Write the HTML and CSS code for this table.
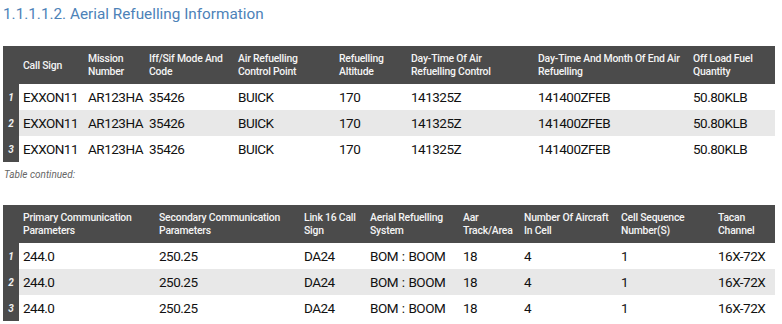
FILE: index.html
```html
<!DOCTYPE html>
<html>
<head>
<meta charset="utf-8">
<link rel="stylesheet" href="styles.css">
</head>
<body>
<div class="page">
  <h3 class="title">1.1.1.1.2. Aerial Refuelling Information</h3>
  <table class="data t1">
    <colgroup>
      <col class="c-num"><col style="width:65px"><col style="width:61px"><col style="width:89px"><col style="width:101px"><col style="width:72px"><col style="width:127px"><col style="width:155px"><col style="width:86px">
    </colgroup>
    <thead>
      <tr><th class="num"></th><th>Call Sign</th><th>Mission Number</th><th>Iff/Sif Mode And Code</th><th>Air Refuelling Control Point</th><th>Refuelling Altitude</th><th>Day-Time Of Air<br>Refuelling Control</th><th>Day-Time And Month Of End Air Refuelling</th><th>Off Load Fuel Quantity</th></tr>
    </thead>
    <tbody>
      <tr><td class="num">1</td><td>EXXON11</td><td>AR123HA</td><td>35426</td><td>BUICK</td><td>170</td><td>141325Z</td><td>141400ZFEB</td><td>50.80KLB</td></tr>
      <tr><td class="num">2</td><td>EXXON11</td><td>AR123HA</td><td>35426</td><td>BUICK</td><td>170</td><td>141325Z</td><td>141400ZFEB</td><td>50.80KLB</td></tr>
      <tr><td class="num">3</td><td>EXXON11</td><td>AR123HA</td><td>35426</td><td>BUICK</td><td>170</td><td>141325Z</td><td>141400ZFEB</td><td>50.80KLB</td></tr>
    </tbody>
  </table>
  <p class="continued">Table continued:</p>
  <table class="data t2">
    <colgroup>
      <col class="c-num"><col style="width:136px"><col style="width:145px"><col style="width:66px"><col style="width:93px"><col style="width:61px"><col style="width:97px"><col style="width:97px"><col style="width:61px">
    </colgroup>
    <thead>
      <tr><th class="num"></th><th>Primary Communication Parameters</th><th>Secondary Communication Parameters</th><th>Link 16 Call Sign</th><th>Aerial Refuelling System</th><th>Aar Track/Area</th><th>Number Of Aircraft In Cell</th><th>Cell Sequence Number(S)</th><th>Tacan Channel</th></tr>
    </thead>
    <tbody>
      <tr><td class="num">1</td><td>244.0</td><td>250.25</td><td>DA24</td><td>BOM : BOOM</td><td>18</td><td>4</td><td>1</td><td>16X-72X</td></tr>
      <tr><td class="num">2</td><td>244.0</td><td>250.25</td><td>DA24</td><td>BOM : BOOM</td><td>18</td><td>4</td><td>1</td><td>16X-72X</td></tr>
      <tr><td class="num">3</td><td>244.0</td><td>250.25</td><td>DA24</td><td>BOM : BOOM</td><td>18</td><td>4</td><td>1</td><td>16X-72X</td></tr>
    </tbody>
  </table>
</div>
</body>
</html>
```
FILE: styles.css
```css
html, body {
  margin: 0;
  padding: 0;
  background: #ffffff;
}
.page {
  padding: 0 7px 0 3px;
  font-family: Roboto, "Noto Sans", sans-serif;
}
.title {
  margin: 0;
  padding-top: 4px;
  height: 46px;
  box-sizing: border-box;
  font-size: 15.3px;
  font-weight: 400;
  color: #4d82b8;
  line-height: 20px;
}
.data {
  border-collapse: collapse;
  table-layout: fixed;
  width: 772px;
}
.c-num {
  width: 16px;
}
.data th {
  background: #4b4b4b;
  color: #f4f4f4;
  font-size: 10.4px;
  font-weight: 500;
  letter-spacing: -0.2px;
  line-height: 13px;
  text-align: left;
  vertical-align: middle;
  padding: 6px 3px 6px 4px;
  height: 26px;
}
.data td {
  height: 26px;
  padding: 0 4px;
  font-size: 13.5px;
  letter-spacing: -0.5px;
  word-spacing: 1px;
  color: #111111;
  vertical-align: middle;
  white-space: nowrap;
}
.data tbody tr:nth-child(even) td {
  background: #e8e8e8;
}
.data td.num,
.data tbody tr:nth-child(even) td.num {
  background: #4b4b4b;
  color: #f0f0f0;
  font-size: 10px;
  font-weight: 700;
  font-style: italic;
  letter-spacing: 0;
  text-align: center;
  padding: 0;
}
.data th.num {
  padding: 0;
}
.continued {
  margin: 0;
  padding: 7px 0 0 1px;
  height: 43px;
  box-sizing: border-box;
  font-size: 10px;
  font-style: italic;
  color: #666666;
  line-height: 12px;
}
```
